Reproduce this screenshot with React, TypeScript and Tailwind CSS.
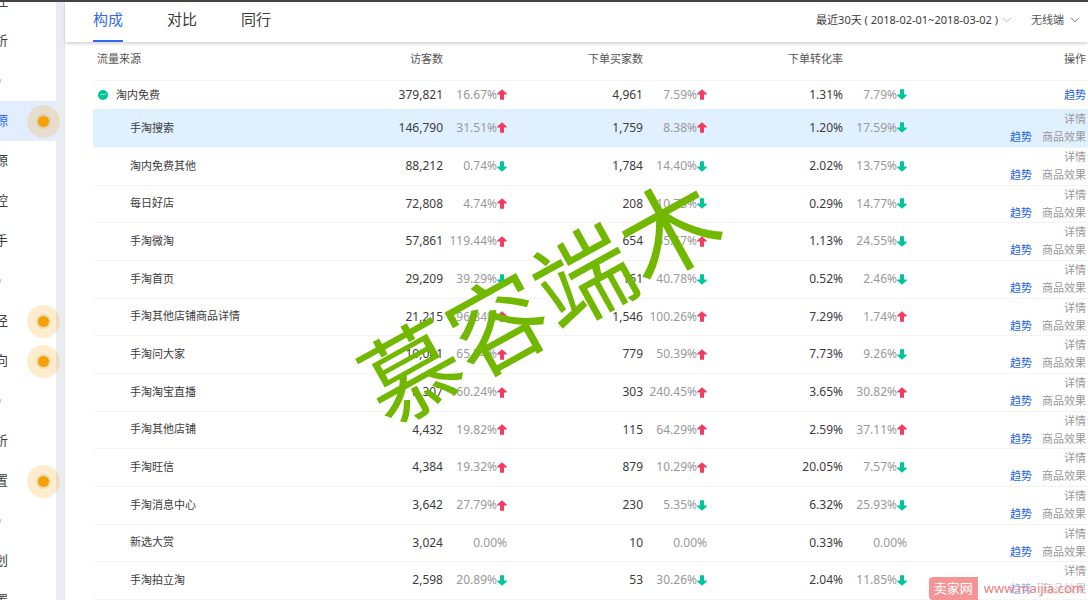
import React from "react";

type Dir = "up" | "down" | "flat";
type Metric = [string, string, Dir];
type Row = { name: string; metrics: [Metric, Metric, Metric] };

const total: Row = {
  name: "淘内免费",
  metrics: [["379,821", "16.67%", "up"], ["4,961", "7.59%", "up"], ["1.31%", "7.79%", "down"]],
};

const rows: Row[] = [
  { name: "手淘搜索", metrics: [["146,790", "31.51%", "up"], ["1,759", "8.38%", "up"], ["1.20%", "17.59%", "down"]] },
  { name: "淘内免费其他", metrics: [["88,212", "0.74%", "down"], ["1,784", "14.40%", "down"], ["2.02%", "13.75%", "down"]] },
  { name: "每日好店", metrics: [["72,808", "4.74%", "up"], ["208", "10.73%", "down"], ["0.29%", "14.77%", "down"]] },
  { name: "手淘微淘", metrics: [["57,861", "119.44%", "up"], ["654", "65.57%", "up"], ["1.13%", "24.55%", "down"]] },
  { name: "手淘首页", metrics: [["29,209", "39.29%", "down"], ["161", "40.78%", "down"], ["0.52%", "2.46%", "down"]] },
  { name: "手淘其他店铺商品详情", metrics: [["21,215", "96.84%", "up"], ["1,546", "100.26%", "up"], ["7.29%", "1.74%", "up"]] },
  { name: "手淘问大家", metrics: [["10,081", "65.74%", "up"], ["779", "50.39%", "up"], ["7.73%", "9.26%", "down"]] },
  { name: "手淘淘宝直播", metrics: [["8,307", "160.24%", "up"], ["303", "240.45%", "up"], ["3.65%", "30.82%", "up"]] },
  { name: "手淘其他店铺", metrics: [["4,432", "19.82%", "up"], ["115", "64.29%", "up"], ["2.59%", "37.11%", "up"]] },
  { name: "手淘旺信", metrics: [["4,384", "19.32%", "up"], ["879", "10.29%", "up"], ["20.05%", "7.57%", "down"]] },
  { name: "手淘消息中心", metrics: [["3,642", "27.79%", "up"], ["230", "5.35%", "down"], ["6.32%", "25.93%", "down"]] },
  { name: "新选大赏", metrics: [["3,024", "0.00%", "flat"], ["10", "0.00%", "flat"], ["0.33%", "0.00%", "flat"]] },
  { name: "手淘拍立淘", metrics: [["2,598", "20.89%", "down"], ["53", "30.26%", "down"], ["2.04%", "11.85%", "down"]] },
];

type NavItem = { label: string; dot?: boolean; active?: boolean };
const nav: NavItem[] = [
  { label: "控" },
  { label: "析" },
  { label: "" },
  { label: "源", dot: true, active: true },
  { label: "源" },
  { label: "控" },
  { label: "手" },
  { label: "" },
  { label: "径", dot: true },
  { label: "向", dot: true },
  { label: "" },
  { label: "析" },
  { label: "置", dot: true },
  { label: "" },
  { label: "划" },
  { label: "置" },
];

function Arrow({ dir }: { dir: Dir }) {
  if (dir === "flat") return null;
  return (
    <svg
      viewBox="0 0 10 11"
      aria-hidden="true"
      className={dir === "up" ? "h-[11px] w-[10px] text-[#f43b61]" : "h-[11px] w-[10px] rotate-180 text-[#00c49a]"}
    >
      <path d="M5 0.2 L9.8 4.4 V5.4 H7 V10.8 H3 V5.4 H0.2 V4.4 Z" fill="currentColor" />
    </svg>
  );
}

function MetricCell({ metric }: { metric: Metric }) {
  const [value, change, dir] = metric;
  return (
    <td className="p-0">
      <div className="flex items-center justify-end text-xs">
        <span className="text-[#3c3c3c]">{value}</span>
        <span className="flex w-16 items-center justify-end text-[#999]">
          {change}
          <Arrow dir={dir} />
        </span>
      </div>
    </td>
  );
}

function Chevron({ className }: { className: string }) {
  return (
    <svg viewBox="0 0 10 6" aria-hidden="true" className={className}>
      <path d="M1 0.8 L5 4.8 L9 0.8" fill="none" stroke="currentColor" />
    </svg>
  );
}

export default function App() {
  return (
    <div className="relative flex h-screen flex-col overflow-hidden bg-white font-['Noto_Sans','Noto_Sans_CJK_SC',sans-serif] text-[11px] text-[#3c3c3c]">
      <div className="h-0.5 shrink-0 bg-[#454343]" />
      <div className="flex min-h-0 flex-1 overflow-hidden">
        <nav aria-label="主导航" className="z-10 w-14 shrink-0">
          <ul className="-mt-[21px]">
            {nav.map((item, i) => (
              <li key={i} className={item.active ? "h-10 bg-[#e4edfe] text-[#2f6be8]" : "h-10"}>
                {item.label ? (
                  <a href="#" className="flex h-full items-center">
                    <span className="-ml-[5px] w-8 shrink-0 text-[13px]">{item.label}</span>
                    {item.dot && (
                      <span className="flex size-[33px] shrink-0 items-center justify-center rounded-full bg-[#f5a20a]/20">
                        <span className="size-[11px] rounded-full bg-[#f5a105] ring-2 ring-[#c9a65a]/25" />
                      </span>
                    )}
                  </a>
                ) : (
                  <div className="flex h-full items-center">
                    <span className="h-1 w-px bg-[#b9d5e3]" />
                  </div>
                )}
              </li>
            ))}
          </ul>
        </nav>
        <div className="w-[9px] shrink-0 border-r border-[#e2e8ee] bg-[#e9edf2]" />
        <main className="min-w-0 flex-1">
          <header className="flex h-10 items-stretch justify-between pl-7 pr-2 shadow-[0_2px_3px_rgba(0,0,0,0.16)]">
            <div role="tablist" className="flex gap-11 text-[15px]">
              <button role="tab" aria-selected="true" className="border-b-2 border-[#2f6be8] pb-1 text-[#2f6be8]">构成</button>
              <button role="tab" aria-selected="false" className="border-b-2 border-transparent pb-1">对比</button>
              <button role="tab" aria-selected="false" className="border-b-2 border-transparent pb-1">同行</button>
            </div>
            <div className="flex items-center gap-[19px] pb-1">
              <button className="flex items-center gap-1">
                最近30天 ( 2018-02-01~2018-03-02 )
                <Chevron className="h-1.5 w-2.5 text-[#b5bcc6]" />
              </button>
              <button className="flex items-center gap-1.5 text-[#555]">
                无线端
                <Chevron className="h-1.5 w-2.5 text-[#777]" />
              </button>
            </div>
          </header>
          <div className="pl-7">
            <table className="w-full table-fixed border-collapse">
              <colgroup>
                <col />
                <col className="w-[200px]" />
                <col className="w-[200px]" />
                <col className="w-[200px]" />
                <col className="w-[181px]" />
              </colgroup>
              <thead>
                <tr className="h-[38px] border-b border-[#f4f4f4] text-[#555]">
                  <th className="pb-1 pl-1 text-left font-normal">流量来源</th>
                  <th className="pb-1 pr-16 text-right font-normal">访客数</th>
                  <th className="pb-1 pr-16 text-right font-normal">下单买家数</th>
                  <th className="pb-1 pr-16 text-right font-normal">下单转化率</th>
                  <th className="pb-1 pr-0.5 text-right font-normal">操作</th>
                </tr>
              </thead>
              <tbody>
                <tr className="h-[29px]">
                  <td className="p-0">
                    <div className="flex items-center gap-2 pl-[5px]">
                      <button aria-label="收起" className="flex size-[10px] items-center justify-center rounded-full bg-[#00c49a]">
                        <span className="h-px w-1.5 bg-white/50" />
                      </button>
                      {total.name}
                    </div>
                  </td>
                  {total.metrics.map((m, i) => <MetricCell key={i} metric={m} />)}
                  <td className="p-0 pr-0.5 text-right">
                    <a href="#" className="text-[#2062e6]">趋势</a>
                  </td>
                </tr>
              </tbody>
              <tbody>
                {rows.map((row, i) => (
                  <tr
                    key={row.name}
                    className={
                      i === 0
                        ? "h-[38px] border-b border-[#f4f4f4] bg-[#e0f0ff]"
                        : "h-[38px] border-b border-[#f4f4f4] nth-[3n]:h-[37px]"
                    }
                  >
                    <td className="p-0 pl-[37px]">{row.name}</td>
                    {row.metrics.map((m, j) => <MetricCell key={j} metric={m} />)}
                    <td className="p-0 pr-0.5 text-right leading-[18px] text-[#999]">
                      <a href="#" className="block">详情</a>
                      <a href="#" className="mr-2.5 text-[#2062e6]">趋势</a>
                      <a href="#">商品效果</a>
                    </td>
                  </tr>
                ))}
              </tbody>
            </table>
          </div>
        </main>
      </div>
      <div className="pointer-events-none absolute left-[344px] top-[250px] -rotate-[29deg] whitespace-nowrap text-[98px] leading-[100px] text-[#72b700]">
        慕容端木
      </div>
      <div className="pointer-events-none absolute bottom-0 right-1 flex h-[23px] items-center text-[13px] text-[#e88080]">
        <span className="flex h-full items-center rounded-l bg-[#f59494] px-[5px] text-white">卖家网</span>
        <span className="bg-white/50 pl-1.5">www.maijia.com</span>
      </div>
    </div>
  );
}
